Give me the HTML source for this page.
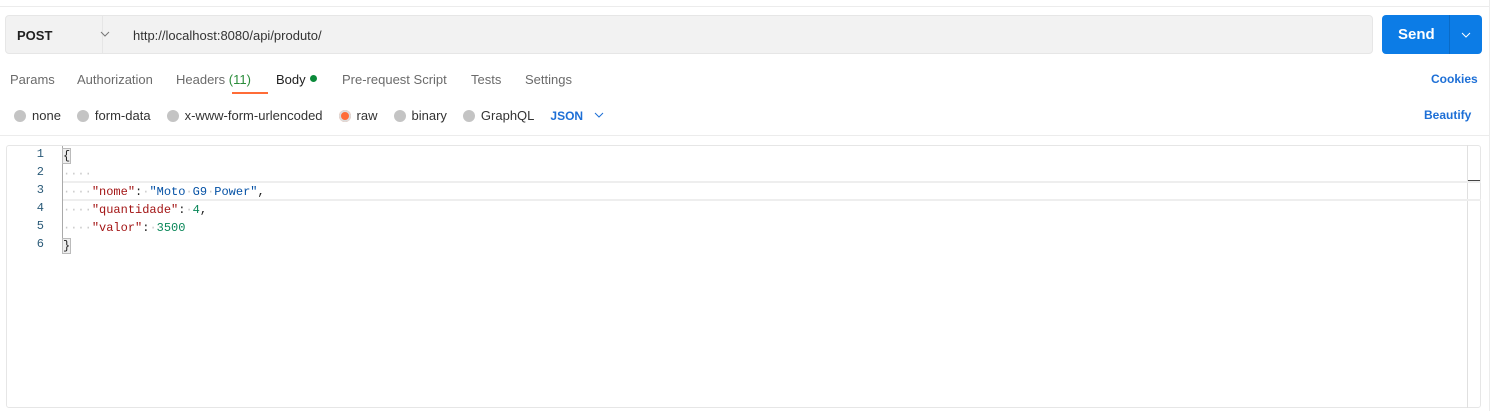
<!DOCTYPE html><html><head><style>
body{margin:0;width:1495px;height:411px;background:#fff;font-family:"Liberation Sans",sans-serif;position:relative;overflow:hidden;font-size:13px;color:#212121}
.a{position:absolute}
.t{color:#6b6b6b}
.r{display:inline-block;width:12px;height:12px;border-radius:50%;background:#c4c4c4;vertical-align:-2px;margin-right:6px}
.code{font-family:"Liberation Mono",monospace;font-size:12px}
.ln{position:absolute;left:20px;width:24px;text-align:right;color:#2a5a78;font-family:"Liberation Mono",monospace;font-size:12px}
.k{color:#a31515}.s{color:#0451a5}.n{color:#098658}.d{color:#c8c8c8}
</style></head><body>
<div class="a" style="left:0;top:6px;width:1489px;height:1px;background:#ececec"></div>
<div class="a" style="left:1489px;top:0;width:1px;height:411px;background:#ececec"></div>
<div class="a" style="left:5px;top:15px;width:1368px;height:39px;background:#f2f2f2;border:1px solid #e6e6e6;border-radius:4px;box-sizing:border-box"></div>
<div class="a" style="left:102px;top:15px;width:1px;height:39px;background:#e6e6e6"></div>
<div class="a" style="left:17px;top:28px;font-weight:bold;font-size:13px">POST</div>
<svg class="a" style="left:100px;top:31px" width="10" height="6"><path d="M1 1l4 4 4-4" stroke="#777" fill="none"/></svg>
<div class="a" style="left:133px;top:28px;color:#333">http://localhost:8080/api/produto/</div>
<div class="a" style="left:1382px;top:15px;width:100px;height:39px;background:#0c7ce6;border-radius:4px"></div>
<div class="a" style="left:1449px;top:15px;width:1px;height:39px;background:#0a6bc7"></div>
<div class="a" style="left:1398px;top:26px;color:#fff;font-weight:bold;font-size:15px">Send</div>
<svg class="a" style="left:1461px;top:32px" width="10" height="6"><path d="M1 1l4 4 4-4" stroke="#fff" fill="none"/></svg>
<div class="a t" style="left:10px;top:72px">Params</div>
<div class="a t" style="left:77px;top:72px">Authorization</div>
<div class="a t" style="left:176px;top:72px">Headers <span style="color:#2a8c3a">(11)</span></div>
<div class="a" style="left:276px;top:72px">Body</div>
<div class="a" style="left:310px;top:75px;width:7px;height:7px;border-radius:50%;background:#0b8a3a"></div>
<div class="a" style="left:232px;top:92px;width:36px;height:2px;background:#ff6c37"></div>
<div class="a t" style="left:342px;top:72px">Pre-request Script</div>
<div class="a t" style="left:471px;top:72px">Tests</div>
<div class="a t" style="left:525px;top:72px">Settings</div>
<div class="a" style="left:1431px;top:72px;color:#1d6fd6;font-weight:bold;font-size:12px">Cookies</div>
<div class="a" style="left:14px;top:108px;color:#333;white-space:nowrap"><span class="r"></span>none<span style="display:inline-block;width:16px"></span><span class="r"></span>form-data<span style="display:inline-block;width:16px"></span><span class="r"></span>x-www-form-urlencoded<span style="display:inline-block;width:16px"></span><span class="r" style="background:#ff6c37;box-shadow:0 0 0 2px #ddd inset;border:0"></span>raw<span style="display:inline-block;width:16px"></span><span class="r"></span>binary<span style="display:inline-block;width:16px"></span><span class="r"></span>GraphQL<span style="display:inline-block;width:16px"></span><b style="color:#1d6fd6;font-size:12px">JSON</b></div>
<svg class="a" style="left:594px;top:112px" width="10" height="6"><path d="M1 1l4 4 4-4" stroke="#1d6fd6" fill="none"/></svg>
<div class="a" style="left:1424px;top:108px;color:#1d6fd6;font-weight:bold;font-size:12px">Beautify</div>
<div class="a" style="left:0;top:135px;width:1489px;height:1px;background:#ececec"></div>
<div class="a" style="left:6px;top:145px;width:1475px;height:263px;border:1px solid #e6e6e6;box-sizing:border-box;border-radius:3px"></div>
<div class="a" style="left:1467px;top:145px;width:1px;height:263px;background:#e0e0e0"></div>
<div class="a" style="left:1468px;top:180px;width:12px;height:2px;background:#444"></div>
<div class="a" style="left:62px;top:181px;width:1419px;height:16px;border-top:2px solid #eee;border-bottom:2px solid #eee"></div>
<div class="a" style="left:62px;top:146px;width:1px;height:106px;background:#aaa"></div>
<div class="ln" style="top:147px">1</div><div class="ln" style="top:165px">2</div><div class="ln" style="top:183px">3</div><div class="ln" style="top:201px">4</div><div class="ln" style="top:219px">5</div><div class="ln" style="top:237px">6</div>
<div class="a code" style="left:63px;top:147px;line-height:18px;white-space:pre"><span style="background:#eee;outline:1px solid #bbb">{</span>
<span class="d">····</span>
<span class="d">····</span><span class="k">"nome"</span>:<span class="d">·</span><span class="s">"Moto<span class="d">·</span>G9<span class="d">·</span>Power"</span>,
<span class="d">····</span><span class="k">"quantidade"</span>:<span class="d">·</span><span class="n">4</span>,
<span class="d">····</span><span class="k">"valor"</span>:<span class="d">·</span><span class="n">3500</span>
<span style="background:#eee;outline:1px solid #bbb">}</span></div>
</body></html>
